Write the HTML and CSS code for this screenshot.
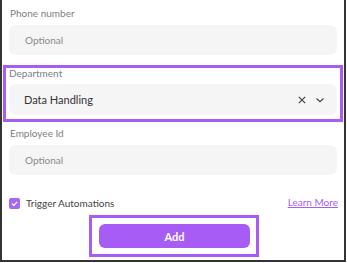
FILE: index.html
```html
<!DOCTYPE html>
<html lang="en">
<head>
    <meta charset="UTF-8">
    <title>Add employee</title>
    <link rel="stylesheet" href="styles.css">
</head>
<body>
<div class="panel">
    <!-- PHONE -->
    <div class="field first">
        <label class="label">Phone number</label>
        <div class="input"><span class="placeholder">Optional</span></div>
    </div>

    <!-- DEPARTMENT -->
    <div class="field highlight">
        <label class="label">Department</label>
        <div class="input select">
            <span class="value">Data Handling</span>
            <span class="icons">
                <svg class="icon" width="10" height="10" viewBox="0 0 10 10"><path d="M1.8 1.8 L8.2 8.2 M8.2 1.8 L1.8 8.2" stroke="#444" stroke-width="1.2" fill="none"/></svg>
                <svg class="icon" width="10" height="10" viewBox="0 0 10 10"><path d="M1.5 3.5 L5 6.8 L8.5 3.5" stroke="#444" stroke-width="1.2" fill="none"/></svg>
            </span>
        </div>
    </div>

    <!-- EMPLOYEE ID -->
    <div class="field">
        <label class="label">Employee Id</label>
        <div class="input"><span class="placeholder">Optional</span></div>
    </div>

    <div class="options">
        <div class="check">
            <span class="box"><svg width="11" height="11" viewBox="0 0 11 11"><path d="M3 5.6 L4.8 7.3 L8.2 3.8" stroke="#fff" stroke-width="1.2" fill="none"/></svg></span>
            <span>Trigger Automations</span>
        </div>
        <a class="learn" href="#">Learn More</a>
    </div>

    <div class="actions">
        <div class="focus"><button class="add">Add</button></div>
    </div>
</div>
</body>
</html>
```

FILE: styles.css
```css
html, body {
    margin: 0;
    padding: 0;
    background: #fff;
}

*, *:before, *:after {
    box-sizing: border-box;
}

body {
    font-family: 'Lato', 'Open Sans', sans-serif;
    color: #333;
}

.panel {
    width: 346px;
    height: 262px;
    border: solid 2px #333;
    border-top: none;
    padding: 0 7px;
}

.field.first {
    padding-top: 6px;
}

.label {
    display: block;
    font-size: 10px;
    line-height: 14px;
    color: #808080;
    margin-left: 1px;
}

.input {
    margin-top: 5px;
    height: 30px;
    background: #f5f5f5;
    border-radius: 7px;
    display: flex;
    align-items: center;
    padding: 0 16px;
    font-size: 11px;
}

.placeholder {
    color: #8a8a8a;
    font-size: 10px;
}

.highlight {
    margin: 10px -6px 0;
    border: solid 3px #a65cf5;
    padding: 0 3px 4px;
}

.highlight .label {
    line-height: 11px;
    margin-left: 0;
}

.highlight .input {
    margin-top: 5px;
    height: 31px;
}

.select {
    justify-content: space-between;
    padding: 0 12px 0 15px;
}

.value {
    color: #333;
}

.icons {
    display: flex;
    gap: 8px;
}

.icon {
    display: block;
}

.highlight + .field {
    margin-top: 4px;
}

.options {
    margin-top: 20px;
    display: flex;
    justify-content: space-between;
    align-items: center;
    font-size: 10px;
    height: 14px;
}

.check {
    display: flex;
    align-items: center;
    gap: 6px;
    color: #444;
    margin-top: 2px;
}

.box {
    width: 11px;
    height: 11px;
    border-radius: 2px;
    background: #a66af2;
    display: block;
}

.box svg {
    display: block;
}

.learn {
    color: #a65cf5;
    font-size: 10px;
    margin-right: -1px;
}

.actions {
    margin-top: 6px;
    display: flex;
    justify-content: center;
}

.focus {
    margin-left: 2px;
    border: solid 3px #a65cf5;
    padding: 6px 6px 6px 7px;
}

.add {
    display: block;
    width: 151px;
    height: 24px;
    border: none;
    border-radius: 6px;
    background: #a65cf5;
    color: #fff;
    font-family: inherit;
    font-weight: bold;
    font-size: 11px;
}
```
